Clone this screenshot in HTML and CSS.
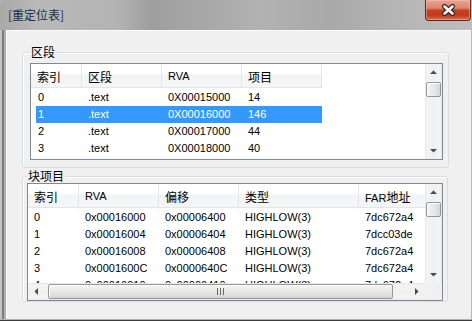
FILE: index.html
```html
<!DOCTYPE html>
<html>
<head>
<meta charset="utf-8">
<link rel="stylesheet" href="styles.css">
</head>
<body>
<div class="win">
  <div class="titlebar">
    <div class="title">[重定位表]</div>
    <div class="close">
      <svg width="46" height="21" viewBox="0 0 46 21">
        <path d="M19.5 7.5 L27.5 14.5 M27.5 7.5 L19.5 14.5" stroke="#3a2420" stroke-width="5" stroke-linecap="round" fill="none"/>
        <path d="M19.5 7.5 L27.5 14.5 M27.5 7.5 L19.5 14.5" stroke="#ffffff" stroke-width="2.6" stroke-linecap="round" fill="none"/>
      </svg>
    </div>
  </div>
  <div class="main">
    <div class="frame-l"></div>
    <div class="client">
      <fieldset class="group g1">
        <legend>区段</legend>
        <div class="list l1">
          <div class="view">
            <div class="hdr h1">
              <div class="hc c0">索引</div>
              <div class="hc">区段</div>
              <div class="hc lat">RVA</div>
              <div class="hc">项目</div>
            </div>
            <div class="rows">
              <div class="row r1"><span class="d0">0</span><span>.text</span><span>0X00015000</span><span>14</span></div>
              <div class="row r1 sel"><span class="d0">1</span><span>.text</span><span>0X00016000</span><span>146</span></div>
              <div class="row r1"><span class="d0">2</span><span>.text</span><span>0X00017000</span><span>44</span></div>
              <div class="row r1"><span class="d0">3</span><span>.text</span><span>0X00018000</span><span>40</span></div>
            </div>
          </div>
          <div class="vscroll">
            <div class="btn"><svg width="17" height="17" viewBox="0 0 17 17"><path d="M5 10 L8.5 6.5 L12 10 Z" fill="#4a4a4a"/></svg></div>
            <div class="vthumb"></div>
            <div class="spacer"></div>
            <div class="btn"><svg width="17" height="17" viewBox="0 0 17 17"><path d="M5 7 L8.5 10.5 L12 7 Z" fill="#4a4a4a"/></svg></div>
          </div>
        </div>
      </fieldset>
      <fieldset class="group g2">
        <legend>块项目</legend>
        <div class="list l2">
          <div class="view">
            <div class="hdr h2">
              <div class="hc c0">索引</div>
              <div class="hc lat">RVA</div>
              <div class="hc">偏移</div>
              <div class="hc">类型</div>
              <div class="hc"><span class="lat">FAR</span>地址</div>
            </div>
            <div class="rows">
              <div class="row r2"><span>0</span><span>0x00016000</span><span>0x00006400</span><span>HIGHLOW(3)</span><span>7dc672a4</span></div>
              <div class="row r2"><span>1</span><span>0x00016004</span><span>0x00006404</span><span>HIGHLOW(3)</span><span>7dcc03de</span></div>
              <div class="row r2"><span>2</span><span>0x00016008</span><span>0x00006408</span><span>HIGHLOW(3)</span><span>7dc672a4</span></div>
              <div class="row r2"><span>3</span><span>0x0001600C</span><span>0x0000640C</span><span>HIGHLOW(3)</span><span>7dc672a4</span></div>
              <div class="row r2"><span>4</span><span>0x00016010</span><span>0x00006410</span><span>HIGHLOW(3)</span><span>7dc672a4</span></div>
            </div>
          </div>
          <div class="vscroll">
            <div class="btn"><svg width="17" height="17" viewBox="0 0 17 17"><path d="M5 10 L8.5 6.5 L12 10 Z" fill="#4a4a4a"/></svg></div>
            <div class="vthumb"></div>
            <div class="spacer"></div>
            <div class="btn"><svg width="17" height="17" viewBox="0 0 17 17"><path d="M5 7 L8.5 10.5 L12 7 Z" fill="#4a4a4a"/></svg></div>
          </div>
          <div class="hscroll">
            <div class="btn"><svg width="17" height="17" viewBox="0 0 17 17"><path d="M10 5 L6.5 8.5 L10 12 Z" fill="#4a4a4a"/></svg></div>
            <div class="hthumb"><svg width="9" height="7" viewBox="0 0 9 7"><path d="M1.5 0 V7 M4.5 0 V7 M7.5 0 V7" stroke="#6a6a6a" stroke-width="1"/></svg></div>
            <div class="spacer"></div>
            <div class="btn"><svg width="17" height="17" viewBox="0 0 17 17"><path d="M7 5 L10.5 8.5 L7 12 Z" fill="#4a4a4a"/></svg></div>
          </div>
          <div class="corner"></div>
        </div>
      </fieldset>
    </div>
    <div class="frame-r"></div>
  </div>
  <div class="frame-b"></div>
</div>
</body>
</html>
```

FILE: styles.css
```css
html, body {
  margin: 0;
  padding: 0;
  background: #b4b4b4;
}
.win {
  width: 472px;
  height: 321px;
  overflow: hidden;
  display: flex;
  flex-direction: column;
  border-top-left-radius: 6px;
  background: linear-gradient(90deg, #a9a9a9 0%, #b9b9b9 8%, #b3b3b3 25%, #9e9e9e 32%, #a5a5a5 40%, #b2b2b2 55%, #a9a9a9 70%, #b6b6b6 85%, #bdbdbd 100%);
  font-family: "Noto Sans CJK SC", "Liberation Sans", sans-serif;
}
.titlebar {
  height: 30px;
  flex: none;
  display: flex;
  justify-content: space-between;
  align-items: flex-start;
  padding-left: 8px;
}
.title {
  margin-top: 8px;
  font-size: 12px;
  line-height: 14px;
  color: #1a2d48;
}
.close {
  width: 46px;
  height: 21px;
  margin-right: 1px;
  box-sizing: border-box;
  border: 1px solid #5a2a22;
  border-top: none;
  border-radius: 0 0 4px 4px;
  background: linear-gradient(#e8a596 0%, #dc8672 40%, #c6411f 52%, #c2391c 75%, #db6e52 100%);
  box-shadow: inset 0 0 0 1px rgba(255, 200, 180, 0.45);
}
.close svg {
  display: block;
  margin: -1px 0 0 -1px;
}
.main {
  flex: 1;
  display: flex;
  min-height: 0;
}
.frame-l {
  width: 6px;
  flex: none;
  background: linear-gradient(90deg, #c4c4c4 0, #c4c4c4 2px, #7c7c7c 2px, #7c7c7c 4px, #b0b0b0 4px, #b0b0b0 6px);
}
.frame-r {
  width: 1px;
  flex: none;
  background: #b8b8b8;
}
.frame-b {
  height: 2px;
  flex: none;
  background: linear-gradient(#b0b0b0 0, #b0b0b0 1px, #3c3c3c 1px);
}
.client {
  flex: 1;
  background: #f0f0f0;
  border-top: 1px solid #fbfbfb;
  border-left: 1px solid #fbfbfb;
  padding: 14px 0 0 15px;
  display: flex;
  flex-direction: column;
  align-items: flex-start;
}
.group {
  margin: 0;
  box-sizing: border-box;
  border: 1px solid #d5dfe5;
  border-radius: 3px;
  box-shadow: inset 1px 1px 0 #fff;
  min-width: 0;
}
.group legend {
  padding: 0 1px;
  font-size: 12px;
  line-height: 14px;
  color: #000;
}
.g1 {
  width: 427px;
  padding: 4px 5px 7px 7px;
}
.g2 {
  width: 426px;
  margin-top: 1px;
  padding: 0 3px 0 4px;
}
.list {
  box-sizing: border-box;
  border: 1px solid #828790;
  background: #fff;
  display: grid;
  grid-template-columns: 1fr 17px;
}
.l1 {
  width: 413px;
  height: 97px;
  grid-template-rows: 1fr;
}
.l2 {
  width: 416px;
  height: 118px;
  grid-template-rows: 1fr 17px;
}
.view {
  overflow: hidden;
  min-width: 0;
  min-height: 0;
}
.hdr {
  display: grid;
  height: 24px;
  box-sizing: border-box;
  border-bottom: 1px solid #e5e5e5;
  background: linear-gradient(#ffffff 0%, #ffffff 45%, #f3f4f6 46%, #f4f5f7 100%);
  width: max-content;
}
.h1 {
  grid-template-columns: 51px 80px 80px 80px;
}
.h2 {
  grid-template-columns: 51px 80px 80px 120px 90px;
}
.hc {
  box-sizing: border-box;
  padding: 2px 0 0 6px;
  font-size: 12px;
  line-height: 21px;
  color: #000;
  border-right: 1px solid #e3e5e8;
  white-space: nowrap;
}
.hc .lat, .hc.lat {
  font-family: "Liberation Sans", sans-serif;
  font-size: 11px;
}
.rows {
  padding-top: 1px;
}
.row {
  display: grid;
  height: 17px;
  font-family: "Liberation Sans", sans-serif;
  font-size: 11px;
  line-height: 17px;
  color: #000;
  white-space: nowrap;
  width: max-content;
}
.row span {
  padding-left: 6px;
}
.r1 {
  margin-left: 5px;
  grid-template-columns: 46px 80px 80px 80px;
}
.r1 .d0 {
  padding-left: 2px;
}
.r2 {
  grid-template-columns: 51px 80px 80px 120px 90px;
}
.sel {
  background: #3399ff;
  color: #fff;
}
.vscroll {
  display: flex;
  flex-direction: column;
  background: linear-gradient(90deg, #e6e6e6 0, #f4f4f4 2px, #f0f0f0 50%, #f4f4f4 15px, #e6e6e6 17px);
  min-height: 0;
}
.hscroll {
  display: flex;
  background: linear-gradient(#e6e6e6 0, #f4f4f4 2px, #f0f0f0 50%, #f4f4f4 15px, #e6e6e6 17px);
  min-width: 0;
}
.btn {
  width: 17px;
  height: 17px;
  flex: none;
}
.btn svg {
  display: block;
}
.spacer {
  flex: 1;
}
.vthumb {
  width: 15px;
  height: 15px;
  margin: 1px 0 0 1px;
  box-sizing: border-box;
  border: 1px solid #979797;
  border-radius: 2px;
  background: linear-gradient(90deg, #f5f5f5 0%, #e8e8e8 50%, #d6d6d6 100%);
  box-shadow: inset 1px 1px 0 #fff;
  flex: none;
}
.hthumb {
  width: 345px;
  height: 15px;
  margin: 1px 0 0 3px;
  box-sizing: border-box;
  border: 1px solid #979797;
  border-radius: 2px;
  background: linear-gradient(#f5f5f5 0%, #e8e8e8 50%, #d6d6d6 100%);
  box-shadow: inset 1px 1px 0 #fff;
  flex: none;
  display: flex;
  align-items: center;
  justify-content: center;
}
.hthumb svg {
  display: block;
}
.corner {
  background: #f0f0f0;
}
```
